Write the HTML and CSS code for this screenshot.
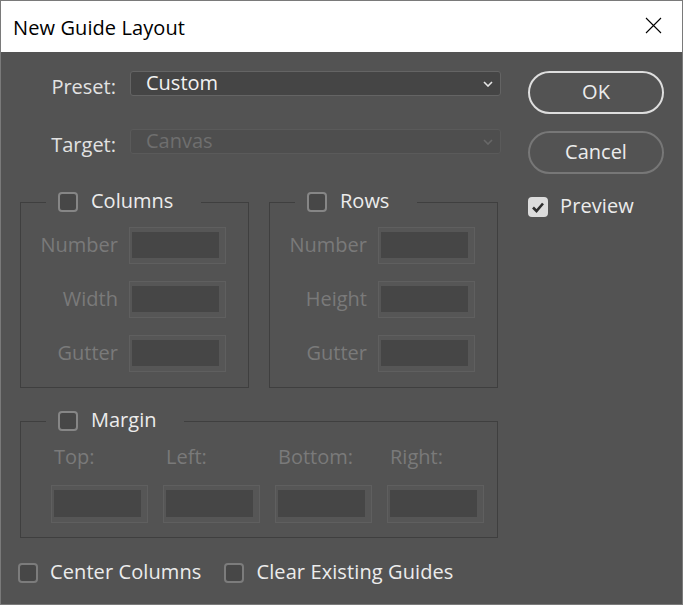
FILE: index.html
```html
<!DOCTYPE html>
<html>
<head>
<meta charset="utf-8">
<link rel="stylesheet" href="styles.css">
</head>
<body>
<div class="window">
  <div class="titlebar">
    <span class="title">New Guide Layout</span>
    <svg class="close" width="17" height="17" viewBox="0 0 17 17"><path d="M1 1 L16 16 M16 1 L1 16" stroke="#000" stroke-width="1.1" fill="none"/></svg>
  </div>
  <div class="content">
    <div class="main">
      <div class="field-row">
        <span class="field-label">Preset:</span>
        <div class="select">
          <span class="select-text">Custom</span>
          <svg class="chev" width="10" height="6" viewBox="0 0 10 6"><path d="M1 1 L5 5 L9 1" stroke="#e6e6e6" stroke-width="1.6" fill="none"/></svg>
        </div>
      </div>
      <div class="field-row target">
        <span class="field-label">Target:</span>
        <div class="select disabled">
          <span class="select-text">Canvas</span>
          <svg class="chev" width="10" height="6" viewBox="0 0 10 6"><path d="M1 1 L5 5 L9 1" stroke="#686868" stroke-width="1.6" fill="none"/></svg>
        </div>
      </div>
      <div class="groups">
        <fieldset class="group">
          <legend class="legend"><span class="cb"></span><span class="legend-text">Columns</span></legend>
          <div class="grow"><span class="dim-label">Number</span><div class="input"><div class="fill"></div></div></div>
          <div class="grow"><span class="dim-label">Width</span><div class="input"><div class="fill"></div></div></div>
          <div class="grow"><span class="dim-label">Gutter</span><div class="input"><div class="fill"></div></div></div>
        </fieldset>
        <fieldset class="group">
          <legend class="legend"><span class="cb"></span><span class="legend-text">Rows</span></legend>
          <div class="grow"><span class="dim-label">Number</span><div class="input"><div class="fill"></div></div></div>
          <div class="grow"><span class="dim-label">Height</span><div class="input"><div class="fill"></div></div></div>
          <div class="grow"><span class="dim-label">Gutter</span><div class="input"><div class="fill"></div></div></div>
        </fieldset>
      </div>
      <fieldset class="group margin">
        <legend class="legend"><span class="cb"></span><span class="legend-text">Margin</span></legend>
        <div class="mgrid">
          <span class="dim-label m">Top:</span>
          <span class="dim-label m">Left:</span>
          <span class="dim-label m">Bottom:</span>
          <span class="dim-label m">Right:</span>
          <div class="input m"><div class="fill"></div></div>
          <div class="input m"><div class="fill"></div></div>
          <div class="input m"><div class="fill"></div></div>
          <div class="input m"><div class="fill"></div></div>
        </div>
      </fieldset>
      <div class="bottom-checks">
        <span class="cb bottom"></span><span class="check-text">Center Columns</span>
        <span class="cb bottom second"></span><span class="check-text">Clear Existing Guides</span>
      </div>
    </div>
    <div class="side">
      <div class="btn primary">OK</div>
      <div class="btn cancel">Cancel</div>
      <div class="preview">
        <span class="cb checked"><svg width="14" height="12" viewBox="0 0 14 12"><path d="M2 6.5 L5.5 10 L12 2.5" stroke="#2e2e2e" stroke-width="2.6" fill="none"/></svg></span>
        <span class="check-text">Preview</span>
      </div>
    </div>
  </div>
</div>
</body>
</html>
```
FILE: styles.css
```css
html, body {
  margin: 0;
  padding: 0;
  background: #535353;
}
.window {
  width: 683px;
  height: 605px;
  box-sizing: border-box;
  border: 1px solid #7a7a7a;
  background: #535353;
  font-family: "Open Sans", "Liberation Sans", sans-serif;
  font-size: 20px;
  color: #e8e8e8;
  overflow: hidden;
}
.titlebar {
  height: 51px;
  background: #ffffff;
  display: flex;
  align-items: center;
  justify-content: space-between;
  padding: 0 20px 0 12px;
}
.title {
  color: #000;
  font-size: 20px;
  letter-spacing: 0.1px;
  margin-top: 2px;
}
.close {
  display: block;
  margin-top: -2px;
}
.content {
  display: flex;
  align-items: flex-start;
}
.main {
  width: 481px;
  padding-left: 19px;
  padding-top: 19px;
}
.field-row {
  display: flex;
  align-items: flex-start;
  height: 25px;
}
.field-row.target {
  margin-top: 33px;
}
.field-label {
  width: 96px;
  text-align: right;
  margin-right: 14px;
  line-height: 25px;
  padding-top: 3px;
  color: #e2e2e2;
}
.select {
  flex: 1;
  height: 25px;
  box-sizing: border-box;
  border: 1px solid #646464;
  border-radius: 3px;
  background: #454545;
  display: flex;
  align-items: center;
  justify-content: space-between;
  padding: 0 7px 0 15px;
}
.select-text {
  line-height: 23px;
  margin-top: -3px;
  color: #f2f2f2;
}
.select.disabled {
  background: #4e4e4e;
  border-color: #5a5a5a;
}
.select.disabled .select-text {
  color: #6f6f6f;
}
.chev {
  display: block;
}
.groups {
  display: flex;
  gap: 20px;
  margin-top: 38px;
}
.group {
  margin: 0;
  padding: 15px 0 15px 0;
  border: 1px solid #3f3f3f;
  width: 229px;
  box-sizing: border-box;
  min-width: 0;
}
.legend {
  display: flex;
  align-items: center;
  height: 20px;
  margin-left: 25px;
  padding: 0 28px 0 12px;
}
.legend-text {
  line-height: 20px;
  margin-left: 13px;
  margin-top: -2px;
  color: #ececec;
}
.cb {
  display: inline-block;
  width: 20px;
  height: 20px;
  box-sizing: border-box;
  border: 2px solid #868686;
  border-radius: 4px;
  background: #474747;
  flex: none;
}
.cb.checked {
  background: #dcdcdc;
  border-color: #dcdcdc;
  display: flex;
  align-items: center;
  justify-content: center;
}
.cb.checked svg {
  display: block;
}
.grow {
  display: flex;
  align-items: center;
  height: 37px;
}
.grow + .grow {
  margin-top: 17px;
}
.dim-label {
  color: #7a7a7a;
}
.grow .dim-label {
  width: 97px;
  text-align: right;
  margin-right: 11px;
  margin-top: -2px;
}
.input {
  width: 97px;
  height: 37px;
  box-sizing: border-box;
  border: 1px solid #5f5f5f;
  background: #565656;
  padding: 4px 6px 5px 2px;
}
.fill {
  height: 100%;
  background: #464646;
}
.margin {
  width: 478px;
  margin-top: 23px;
  padding: 13px 0 14px 0;
}
.mgrid {
  display: grid;
  margin-left: 30px;
  grid-template-columns: repeat(4, 97px);
  column-gap: 15px;
  row-gap: 15px;
  grid-template-rows: 26px 38px;
}
.dim-label.m {
  line-height: 26px;
  padding-left: 3px;
}
.input.m {
  height: 38px;
}
.bottom-checks {
  display: flex;
  align-items: center;
  margin-top: 25px;
  margin-left: -2px;
  height: 20px;
}
.cb.bottom {
  border-color: #7c7c7c;
}
.cb.second {
  margin-left: 23px;
}
.check-text {
  margin-left: 12px;
  line-height: 20px;
  margin-top: -2px;
  color: #ececec;
  letter-spacing: 0.1px;
}
.side {
  width: 136px;
  margin-left: 27px;
  padding-top: 19px;
}
.btn {
  height: 43px;
  box-sizing: border-box;
  border: 2px solid #dedede;
  border-radius: 22px;
  display: flex;
  align-items: center;
  justify-content: center;
  color: #ececec;
  padding-bottom: 2px;
}
.btn.cancel {
  margin-top: 17px;
  border-color: #777777;
}
.preview {
  display: flex;
  align-items: center;
  margin-top: 23px;
  height: 20px;
}
```
